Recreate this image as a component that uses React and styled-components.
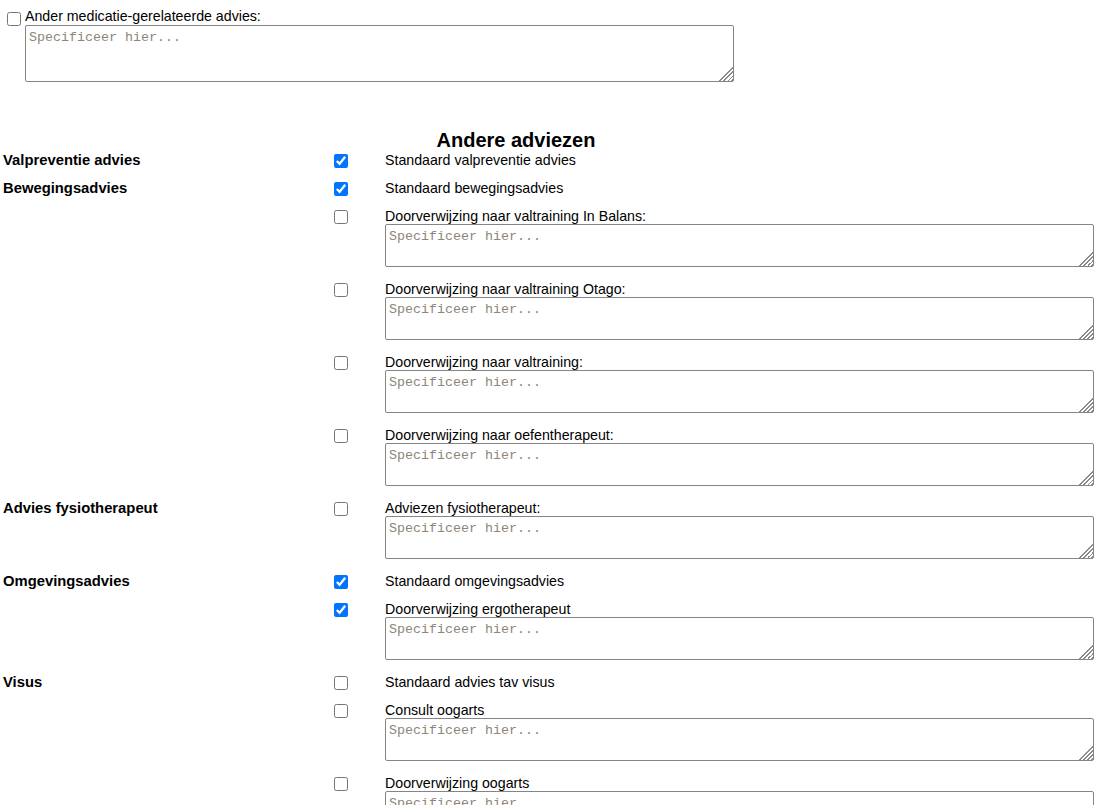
import React from "react";
import styled, { createGlobalStyle } from "styled-components";

const GlobalStyle = createGlobalStyle`
  body {
    margin: 0;
    background: #fff;
    color: #000;
    font-family: "Liberation Sans", Arial, sans-serif;
    font-size: 14.2px;
  }
`;

const Page = styled.div`
  width: 1101px;
  min-height: 805px;
`;

const TopBlock = styled.div`
  display: flex;
  gap: 4px;
  padding: 8px 0 0 7px;
`;

const Check = styled.input.attrs({ type: "checkbox" })`
  width: 14px;
  height: 14px;
  margin: ${(p) => p.$top || 2}px 0 0 0;
  accent-color: #0075ff;
  flex: none;
`;

const Field = styled.div`
  display: flex;
  flex-direction: column;
`;

const FieldLabel = styled.label`
  line-height: ${(p) => p.$lh || 16}px;
  white-space: nowrap;
`;

const Notes = styled.textarea`
  box-sizing: border-box;
  display: block;
  width: 709px;
  height: ${(p) => p.$h || 43}px;
  margin: 0 0 2px;
  padding: 4px 3px 2px;
  border: 1px solid #858585;
  border-radius: 2px;
  font-family: "Liberation Mono", "DejaVu Sans Mono", monospace;
  font-size: 13.33px;
  &::placeholder {
    color: #8d8579;
  }
  &::-webkit-resizer {
    background: linear-gradient(
      135deg,
      transparent 0 52%,
      #8a8a8a 52% 57%,
      transparent 57% 66%,
      #8a8a8a 66% 71%,
      transparent 71% 80%,
      #8a8a8a 80% 85%,
      transparent 85% 93%,
      #8a8a8a 93% 100%
    );
  }
`;

const Heading = styled.h3`
  width: 1032px;
  margin: 45px 0 0;
  font-size: 20px;
  line-height: 23px;
  text-align: center;
  font-weight: bold;
`;

const Rows = styled.div`
  padding-left: 3px;
`;

const Row = styled.div`
  display: grid;
  grid-template-columns: 331px 51px 709px;
  padding-bottom: 12px;
`;

const Topic = styled.div`
  font-weight: bold;
  font-size: 14.8px;
  line-height: 16px;
  white-space: nowrap;
`;

const CheckCell = styled.div`
  display: flex;
  align-items: flex-start;
`;

const rows = [
  { topic: "Valpreventie advies", checked: true, label: "Standaard valpreventie advies" },
  { topic: "Bewegingsadvies", checked: true, label: "Standaard bewegingsadvies" },
  { label: "Doorverwijzing naar valtraining In Balans:", notes: true },
  { label: "Doorverwijzing naar valtraining Otago:", notes: true },
  { label: "Doorverwijzing naar valtraining:", notes: true },
  { label: "Doorverwijzing naar oefentherapeut:", notes: true },
  { topic: "Advies fysiotherapeut", label: "Adviezen fysiotherapeut:", notes: true },
  { topic: "Omgevingsadvies", checked: true, label: "Standaard omgevingsadvies" },
  { checked: true, label: "Doorverwijzing ergotherapeut", notes: true },
  { topic: "Visus", label: "Standaard advies tav visus" },
  { label: "Consult oogarts", notes: true },
  { label: "Doorverwijzing oogarts", notes: true },
];

export default function App() {
  return (
    <Page>
      <GlobalStyle />
      <TopBlock>
        <Check $top={4} id="med-other" />
        <Field>
          <FieldLabel $lh={17} htmlFor="med-other">
            Ander medicatie-gerelateerde advies:
          </FieldLabel>
          <Notes $h={57} placeholder="Specificeer hier..." />
        </Field>
      </TopBlock>

      <Heading>Andere adviezen</Heading>

      <Rows>
        {rows.map((r, i) => (
          <Row key={i}>
            <Topic>{r.topic || ""}</Topic>
            <CheckCell>
              <Check id={"adv-" + i} defaultChecked={!!r.checked} />
            </CheckCell>
            <Field>
              <FieldLabel htmlFor={"adv-" + i}>{r.label}</FieldLabel>
              {r.notes && <Notes placeholder="Specificeer hier..." />}
            </Field>
          </Row>
        ))}
      </Rows>
    </Page>
  );
}
